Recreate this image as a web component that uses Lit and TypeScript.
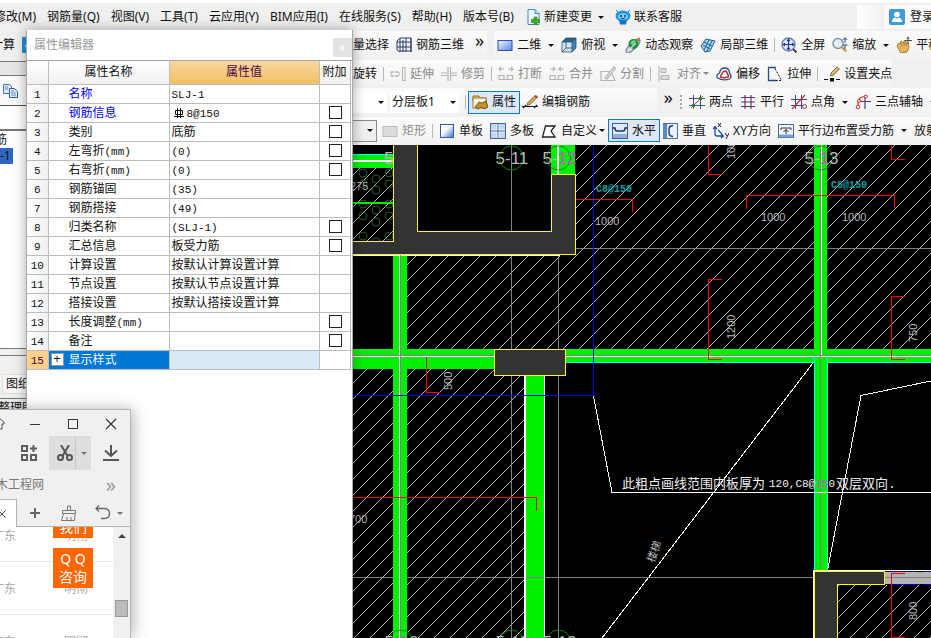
import { LitElement, html, svg, css, nothing, TemplateResult } from "lit";
import { customElement } from "lit/decorators.js";
import { classMap } from "lit/directives/class-map.js";

/* ---------- icons ---------- */
const glyphs: Record<string, TemplateResult> = {
  doc: svg`<path d="M3 .5h7l4 4v11H3z" fill="#eef7fd" stroke="#3a8ac0"/><path d="M10 .5v4h4" fill="#bfe0f3" stroke="#3a8ac0"/><path d="M9 8h3v2.500h2.500v3H12V16H9v-2.500H6.500v-3H9z" fill="#3fae29" stroke="#1d7d12" stroke-width=".6"/>`,
  robot: svg`<path d="M3 3 1 1M13 3l2-2" stroke="#1a7fc9"/><ellipse cx="8" cy="7" rx="7.500" ry="5.500" fill="#1d94e4"/><path d="M4 11h8l-1 4.500H5z" fill="#1277c2"/><ellipse cx="8" cy="7.500" rx="5" ry="3.200" fill="#7dd0ff"/><circle cx="6" cy="7" r="1" fill="#023a6b"/><circle cx="10" cy="7" r="1" fill="#023a6b"/><path d="M6 9q2 1.500 4 0" stroke="#023a6b" fill="none"/>`,
  user: svg`<rect width="16" height="16" rx="2" fill="#3d9bd6"/><circle cx="8" cy="5.500" r="2.800" fill="#fff"/><path d="M3 13q0-4 3.500-4.500L8 10l1.500-1.500Q13 9 13 13z" fill="#fff"/>`,
  blue: svg`<rect width="16" height="16" rx="1" fill="#1e90d8"/><path d="M3 10q1-5 5-4 5-1 5 4-5 3-10 0" fill="#d8efff"/>`,
  rebar: svg`<path d="M1 4l3-3v14l-3-2zM4 1h11v14M10 1v14M15 1v14M1 5h14M1 10h14M4 14h11M7 3v12" fill="none" stroke="#2a3c66"/>`,
  rect: svg`<defs><linearGradient id="rb" x2="1" y2="1"><stop stop-color="#f2f6ff"/><stop offset="1" stop-color="#5a86ea"/></linearGradient></defs><rect x="1" y="3.500" width="14" height="10" fill="url(#rb)" stroke="#2b50b4"/>`,
  rectg: svg`<rect x="1" y="3.500" width="14" height="10" fill="#dcdcdc" stroke="#bcbcbc"/>`,
  cube: svg`<path d="M1 5l4-4h10l-4 4z" fill="#2f6287"/><path d="M11 5l4-4v10l-4 4z" fill="#3f84b8"/><path d="M1 5h10v10H1z" fill="#cfe6f7"/><path d="M1 5l4-4h10v10l-4 4H1zM1 5h10v10M11 5l4-4M5 5v6l-4 4M5 11h6" fill="none" stroke="#2d4b66" stroke-width=".8"/>`,
  orbit: svg`<ellipse cx="8" cy="9" rx="9" ry="3" transform="rotate(-45 8 9)" fill="none" stroke="#7d94a8" stroke-width="1.500"/><circle cx="8.500" cy="7" r="5" fill="#1e8f3e"/><path d="M5 6q3-4 6-2l-3 4z" fill="#6fdc83"/><path d="M2 15l9-9" stroke="#c6d6e2" stroke-width="1.500"/><path d="M11 3l4-3-1 5z" fill="#c77428"/>`,
  partcube: svg`<path d="M1 9l5-7 9 2-5 10-5 1z" fill="#a9d4ee" stroke="#1b628f"/><path d="M4 5l8 4M3 8l7 4M9 3l-5 10M12 4L7 14" stroke="#1b628f" fill="none"/>`,
  full: svg`<circle cx="7.500" cy="7.500" r="6.500" fill="#e6edfa" stroke="#6d7c96" stroke-width="1.400"/><path d="M7.500 2.500v10M2.500 7.500h10M6 4l1.500-1.700L9 4M6 11l1.500 1.700L9 11M4 6L2.300 7.500 4 9M11 6l1.700 1.500L11 9" fill="none" stroke="#1d3da0" stroke-width="1.200"/><path d="M12 12l3.500 3.500" stroke="#444" stroke-width="2"/>`,
  zoom: svg`<circle cx="6" cy="6.500" r="5" fill="#e2ecfb" stroke="#8190a8" stroke-width="1.400"/><path d="M10 10l4 4.500" stroke="#c99a4a" stroke-width="2.400"/><path d="M13 1v5M10.800 3l2.200-2.200L15.200 3M11 8h4.500M13 8v4" stroke="#2e4b78" fill="none"/>`,
  hand: svg`<path d="M1 9l2-3 1 1 1-3 2 2 2-3 1 3 2 0 1 4-2 5-6 1z" fill="#e5b45a" stroke="#96631b" stroke-width=".8"/><path d="M5 6l1 3M8 5v4M10 6v3" stroke="#96631b" stroke-width=".6"/><path d="M12 0v7M9 3.500h7M10.800 1.500L12 0l1.200 1.500" stroke="#4a4a4a" fill="none"/>`,
  extend: svg`<path d="M1 6h8M1 10h8" stroke="#b4b4b4" stroke-width="1.300" stroke-dasharray="3 1"/><path d="M1 6v4M9 6v4M12.500 1v14M15 1v14M12 1.500h3.500M12 14.500h3.500" stroke="#b4b4b4" fill="none"/>`,
  trim: svg`<path d="M0 7h6M10 7h6M0 9.500h6M10 9.500h6M7 1v14M9.500 1v14" stroke="#b4b4b4" fill="none" stroke-width="1.200"/>`,
  brk: svg`<path d="M1 3h5M3 1L1 3l2 2M10 3h5M13 1l2 2-2 2M1 9.500h5v4H1zM9.500 9.500h5v4h-5zM1 13.500h14" stroke="#b4b4b4" fill="none" stroke-width="1.200"/>`,
  join: svg`<path d="M1 3h5M4 1l2 2-2 2M10 3h5M12 1l-2 2 2 2M1 9.500h5v4H1zM9.500 9.500h5v4h-5zM1 13.500h14" stroke="#b4b4b4" fill="none" stroke-width="1.200"/>`,
  split: svg`<path d="M.500 5.500h9M.500 14.500h15M1 5v9M5 12l9-11 1.500 1.500L7 13zM12 8l3 6" stroke="#b4b4b4" fill="none" stroke-width="1.200"/>`,
  align: svg`<path d="M2 0v16" stroke="#aaa"/><path d="M4 2.500h5v4H4zM4 9.500h8v4H4z" fill="#ddd" stroke="#b4b4b4"/>`,
  offset: svg`<path d="M1.500 12q-2-3 2-5 1-5 5-5 5 0 5 5 3 4 0 6-6 2-12-1z" fill="#f0f4fa" stroke="#32547d" stroke-width="1.300"/><path d="M4.500 11q0-2 1.500-3 1-3 3-3t2.500 3q1.500 2 .5 3-4 1.500-7.500 0z" fill="#fff" stroke="#c82a32" stroke-width="1.500"/>`,
  stretch: svg`<path d="M9 1.500H1.500v13H9" fill="none" stroke="#2b4c8c" stroke-width="1.300"/><path d="M8 2.500l6.500 12H7" fill="none" stroke="#111" stroke-dasharray="2 1.500"/>`,
  grip: svg`<path d="M0 13.500h4M12 13.500h4" stroke="#111"/><rect x="6" y="12" width="4" height="3.500" fill="#111"/><path d="M6.500 10l.5-3 6-6 2.500 2-6 6z" fill="#d8ba71" stroke="#66512b" stroke-width=".8"/>`,
  props: svg`<path d="M1 4V2h6l1 2h6v3H1z" fill="#efc370" stroke="#9a6b21"/><rect x="1" y="4" width="13" height="10" fill="#fbf5e7" stroke="#a07a3c"/><path d="M3 13l4-5 3 1 4-2 2 6-4 2-3-2-3 2z" fill="#c59225" stroke="#5e430d" stroke-width=".8"/>`,
  pencil: svg`<path d="M0 12.500h16M1 14l3-3M12 14l3-3" stroke="#222" stroke-width="1.200"/><path d="M5 11.500l1-3 7-7 2 2-7 7z" fill="#d8a95a" stroke="#6b4822" stroke-width=".8"/><path d="M12.500 2.500l1.500-1.500 2 2-1.500 1.500z" fill="#c4343a"/>`,
  twopt: svg`<path d="M4.500 1v14M11.500 1v14M0 4.500h16M0 11.500h16" stroke="#4a4e8c"/><path d="M2 14L14 2" stroke="#c8323a"/><circle cx="4.500" cy="11.500" r="1.800" fill="#2e7a2e"/><circle cx="11.500" cy="4.500" r="1.800" fill="#2e7a2e"/>`,
  parallel: svg`<path d="M5 1v14M11 1v14" stroke="#8a3640" stroke-width="1.200"/><path d="M1 3.500h14M1 8h14M1 12.500h14" stroke="#3b437f"/>`,
  ptangle: svg`<path d="M4.500 1v14M10.500 1v14M0 5.500h16M0 11.500h12" stroke="#3b437f"/><path d="M1 15L14 1" stroke="#c8323a" stroke-width="1.200"/><circle cx="13.500" cy="12.500" r="2" fill="none" stroke="#c8323a"/>`,
  arc3: svg`<path d="M10 1v14M5 7.500h11" stroke="#3b437f" stroke-width="1.200"/><path d="M3 13V8q0-5 7-5.500" fill="none" stroke="#c8323a" stroke-width="1.200"/><circle cx="3" cy="13" r="1.800" fill="#fff" stroke="#c8323a"/><circle cx="11" cy="2.500" r="1.500" fill="#fff" stroke="#c8323a"/><circle cx="4" cy="7" r="1.500" fill="#fff" stroke="#c8323a"/>`,
  single: svg`<defs><linearGradient id="sb" x2="1" y2="1"><stop offset=".4" stop-color="#fff"/><stop offset="1" stop-color="#3b6fd8"/></linearGradient></defs><rect x="1.500" y="1.500" width="13" height="13" fill="url(#sb)" stroke="#3159b4"/>`,
  multi: svg`<rect x=".5" y=".5" width="15" height="15" fill="#c3d6ee" stroke="#41699c"/><path d="M8 1v14M1 8h14" stroke="#f8fbff" stroke-width="3"/><path d="M8 1v14M1 8h14" stroke="#41699c"/>`,
  poly: svg`<path d="M4.500 3h9.500l-4 5 4 6H1.500z" fill="#fff" stroke="#222" stroke-width="1.300"/>`,
  horiz: svg`<rect x=".5" y=".5" width="15" height="15" fill="#dfeafb" stroke="#3a5f9c"/><rect x="1" y="11" width="14" height="4" fill="#8fb0dd"/><path d="M1 5h2q0 3 2 3h6q2 0 2-3h2" fill="none" stroke="#17355f" stroke-width="1.400"/>`,
  vert: svg`<rect x="1.500" y=".5" width="14" height="15" fill="#e8f0fb" stroke="#4a6fae"/><rect x="1" y="1" width="4" height="14" fill="#5b86c9"/><path d="M11 2.500Q7 3 7 6v4q0 3 4 3.500" fill="none" stroke="#17355f" stroke-width="1.400"/>`,
  xy: svg`<path d="M2 4v7q0 2 2 2h6M0 6l2-2.500L4 6M8 11l2.500 2L8 15M5 7l4 4" fill="none" stroke="#1f4fa8" stroke-width="1.300"/><path d="M5 0l3 4M8 0L5 4M12 10l2 3M16 10l-3 6" stroke="#222" fill="none"/>`,
  edge: svg`<rect x=".5" y="1.500" width="15" height="13" fill="#f5f8fd" stroke="#41699c"/><rect x="1" y="11.500" width="14" height="3" fill="#7ba3da"/><path d="M3 7V5h10v2M8 6v5M5.500 9L8 6.500 10.500 9" fill="none" stroke="#333"/>`,
  copy: svg`<path d="M1.500 1.500h6l2 2v7h-8z" fill="#dbe9fa" stroke="#4274b4"/><path d="M7.500 5.500h5l3 3v6h-8z" fill="#eaf3fd" stroke="#2a5fa5"/><path d="M9 8h3M9 10h5M9 12h5M3 4h3M3 6h3" stroke="#5d8ac4"/>`,
  addgrid: svg`<path d="M1 1h5v5H1zM1 10h5v5H1zM10 10h5v5h-5zM12.500 0v7M9 3.500h7" fill="none" stroke="#5f5f5f" stroke-width="2"/>`,
  cut: svg`<path d="M4 0l6.500 11M12 0L5.500 11" stroke="#555" stroke-width="2" fill="none"/><circle cx="3.500" cy="12.500" r="2.500" fill="none" stroke="#555" stroke-width="2"/><circle cx="12.500" cy="12.500" r="2.500" fill="none" stroke="#555" stroke-width="2"/>`,
  down: svg`<path d="M8 0v11M2 5.500L8 11l6-5.500M0 15h16" fill="none" stroke="#555" stroke-width="2"/>`,
  plus: svg`<path d="M8 3v10M3 8h10" stroke="#666" stroke-width="2"/>`,
  brush: svg`<path d="M6.500 5V1h3v4M1.500 5.500h13v3h-13zM2.500 8.500l-2 7h13l.5-7M6 15v-3M10 15v-3" fill="none" stroke="#777"/>`,
  undo: svg`<path d="M1 3.500h8q5.500 0 5.500 5t-5.500 5H6M4 .500l-3 3 3 3" fill="none" stroke="#666" stroke-width="1.300"/>`,
  min: svg`<path d="M3 8.500h10" stroke="#333"/>`,
  max: svg`<rect x="3.500" y="3.500" width="9" height="9" fill="none" stroke="#333"/>`,
  cross: svg`<path d="M3 3l10 10M13 3L3 13" stroke="#333" stroke-width="1.200"/>`,
  skin: svg`<path d="M10 2l-5 4v2h2v5h6V8h2V6z" fill="none" stroke="#555"/>`,
};
const icon = (name: string) =>
  html`<svg class="ico" viewBox="0 0 16 16" aria-hidden="true">${glyphs[name]}</svg>`;

/* Latin runs in the property grid use the narrower fixed-pitch face. */
const mixed = (t: string) =>
  t.split(/([\x20-\x7e]+)/).map((s) => (/^[\x20-\x7e]/.test(s) ? html`<span class="mono">${s}</span>` : s));

interface Row { name: string; value?: string; tick?: boolean; blue?: boolean; symbol?: boolean }

const shared = css`
  .ico { width: 16px; height: 16px; flex: none; display: block; }
  button { font: inherit; color: inherit; background: none; border: 0; margin: 0; padding: 0; white-space: nowrap; flex: none; }
  * { box-sizing: border-box; }
`;

/* ---------- property editor ---------- */
@customElement("property-editor")
export class PropertyEditor extends LitElement {
  rows: Row[] = [
    { name: "名称", value: "SLJ-1", blue: true },
    { name: "钢筋信息", value: "8@150", tick: true, blue: true, symbol: true },
    { name: "类别", value: "底筋", tick: true },
    { name: "左弯折(mm)", value: "(0)", tick: true },
    { name: "右弯折(mm)", value: "(0)", tick: true },
    { name: "钢筋锚固", value: "(35)" },
    { name: "钢筋搭接", value: "(49)" },
    { name: "归类名称", value: "(SLJ-1)", tick: true },
    { name: "汇总信息", value: "板受力筋", tick: true },
    { name: "计算设置", value: "按默认计算设置计算" },
    { name: "节点设置", value: "按默认节点设置计算" },
    { name: "搭接设置", value: "按默认搭接设置计算" },
    { name: "长度调整(mm)", tick: true },
    { name: "备注", tick: true },
  ];

  static styles = [shared, css`
    :host { display: flex; flex-direction: column; background: #fff; border-left: 1px solid #a8a8ac; border-right: 1px solid #a8a8ac; box-shadow: 0 0 12px rgba(0, 0, 0, 0.35); font: 12px/18px "Liberation Sans", "Noto Sans CJK SC", sans-serif; color: #111; }
    header { height: 31px; display: flex; align-items: center; justify-content: space-between; padding-left: 7px; color: #9a9a9a; border-bottom: 1px solid #a8a8ac; }
    .close { width: 19px; height: 19px; background: #e3e3e3; color: #fff; font-size: 10px; line-height: 19px; margin-top: 4px; }
    .grid { border-collapse: collapse; table-layout: fixed; width: 323px; }
    .c-no { width: 21px; } .c-name { width: 121px; } .c-val { width: 150px; } .c-tick { width: 31px; }
    th, td { padding: 0; height: 19px; border-right: 1px solid #bdbdbd; border-bottom: 1px solid #bdbdbd; font-weight: 400; white-space: nowrap; overflow: hidden; line-height: 18px; }
    thead th { height: 23px; background: linear-gradient(#fff, #f0f0f0); }
    thead .on { background: linear-gradient(#f9d79f, #f2bf62); color: #4d004d; }
    tbody th { background: linear-gradient(90deg, #fff, #efefef); }
    .mono { font: 11px/16px "Liberation Mono", monospace; }
    .name { padding-left: 20px; }
    .blue { color: #00f; }
    .val { padding-left: 2px; }
    .sym { width: 10px; height: 10px; margin: 0 3px 0 2px; vertical-align: -1px; }
    input { appearance: none; width: 13px; height: 13px; border: 1px solid #222; background: #fff; margin: 0 0 0 9px; display: block; }
    .sel th { background: #ffd08a; color: #4d004d; }
    .sel .name { background: #0078d7; color: #fff; padding-left: 2px; }
    .sel .val { background: #d9e9f7; }
    .branch { display: flex; align-items: center; gap: 5px; }
    .plus { width: 13px; height: 13px; background: #fff; border: 1px solid #999; color: #000; line-height: 11px; }
  `];

  render() {
    return html`
      <header><span>属性编辑器</span><button class="close" aria-label="关闭">x</button></header>
      <table class="grid">
        <colgroup><col class="c-no" /><col class="c-name" /><col class="c-val" /><col class="c-tick" /></colgroup>
        <thead><tr><th></th><th>属性名称</th><th class="on">属性值</th><th>附加</th></tr></thead>
        <tbody>
          ${this.rows.map((r, i) => html`
            <tr>
              <th><span class="mono">${i + 1}</span></th>
              <td class=${classMap({ name: true, blue: !!r.blue })}>${mixed(r.name)}</td>
              <td class="val">${r.symbol ? html`<svg class="sym" viewBox="0 0 10 10"><path d="M1.500 2.500h7v4h-7zM3.500 0v10M6.500 0v10M0 8.500h10" fill="none" stroke="#111"/></svg>` : nothing}${mixed(r.value ?? "")}</td>
              <td>${r.tick ? html`<input type="checkbox" aria-label=${"附加 " + r.name} />` : nothing}</td>
            </tr>`)}
          <tr class="sel">
            <th><span class="mono">15</span></th>
            <td class="name"><div class="branch"><button class="plus" aria-label="展开">+</button>显示样式</div></td>
            <td class="val"></td><td></td>
          </tr>
        </tbody>
      </table>`;
  }
}

/* ---------- small browser window ---------- */
@customElement("browser-window")
export class BrowserWindow extends LitElement {
  static styles = [shared, css`
    :host { display: flex; flex-direction: column; background: #f0f0f0; border: 1px solid #b4b4b4; border-width: 1px 1px 0 0; box-shadow: 2px 0 14px rgba(0, 0, 0, 0.3); font: 12px/18px "Noto Sans", "Noto Sans CJK SC", sans-serif; color: #777; overflow: hidden; }
    .caption { display: flex; justify-content: space-between; height: 26px; align-items: center; padding: 2px 11px 0 0; margin-left: -11px; }
    .tools { display: flex; height: 34px; align-items: center; padding-left: 21px; }
    .cut { display: flex; align-items: center; height: 34px; margin: 0 12px; background: #dedede; }
    .cut button { height: 34px; display: grid; place-items: center; }
    .main { width: 27px; padding-left: 6px; border-right: 1px solid #c8c8c8; }
    .drop { width: 15px; }
    .caret { border: 3px solid transparent; border-top-color: #777; border-bottom: 0; }
    .marks { display: flex; justify-content: space-between; height: 30px; align-items: center; padding-right: 14px; margin-left: -4px; }
    .more { font-size: 20px; color: #999; line-height: 20px; }
    .tabs { display: flex; height: 27px; align-items: center; border-bottom: 1px solid #b4b4b4; gap: 18px; padding-right: 6px; }
    .tab { width: 17px; height: 28px; background: #fff; border: 1px solid #b4b4b4; border-width: 1px 1px 0 0; display: flex; align-items: center; margin-right: -8px; overflow: hidden; }
    .tab .ico { width: 12px; margin-left: -4px; }
    .undo { display: flex; align-items: center; gap: 6px; }
    .page { flex: 1; display: flex; background: #fff; min-height: 0; }
    .list { flex: 1; position: relative; overflow: hidden; color: #aaa; }
    .item { display: flex; justify-content: space-between; height: 53px; border-bottom: 1px solid #e8e8e8; padding: 18px 25px 0 0; margin-left: -8px; }
    .item:first-child { height: 35px; padding-top: 0; }
    .ads { position: absolute; left: 53px; top: -29px; display: grid; gap: 10px; }
    .ad { display: block; width: 40px; height: 40px; background: #f60; color: #fff; font-size: 14px; line-height: 18px; padding-top: 2px; text-align: center; text-decoration: none; }
    .scroll { width: 17px; background: #f0f0f0; display: flex; flex-direction: column; align-items: center; padding-top: 7px; }
    .up { border: 4px solid transparent; border-bottom-color: #444; border-top: 0; }
    .thumb { width: 13px; height: 17px; margin-top: 62px; background: #bcbcbc; border: 1px solid #999; }
  `];

  render() {
    return html`
      <div class="caption">${["skin", "min", "max", "cross"].map((n) => html`<button>${icon(n)}</button>`)}</div>
      <div class="tools">
        <button>${icon("addgrid")}</button>
        <span class="cut"><button class="main">${icon("cut")}</button><button class="drop"><span class="caret"></span></button></span>
        <button>${icon("down")}</button>
      </div>
      <div class="marks"><button>木工程网</button><button class="more">»</button></div>
      <div class="tabs">
        <button class="tab">${icon("cross")}</button><button>${icon("plus")}</button><button>${icon("brush")}</button>
        <button class="undo">${icon("undo")}<span class="caret"></span></button>
      </div>
      <div class="page">
        <div class="list">
          ${[0, 1, 2].map(() => html`<div class="item"><span>广东</span><span>明彻</span></div>`)}
          <div class="ads"><a class="ad" href="#">联系<br />我们</a><a class="ad" href="#">Q Q<br />咨询</a></div>
        </div>
        <div class="scroll"><span class="up"></span><span class="thumb"></span></div>
      </div>`;
  }
}

/* ---------- drawing ---------- */
@customElement("cad-canvas")
export class CadCanvas extends LitElement {
  static styles = css`
    :host { display: block; background: #000; position: relative; overflow: hidden; }
    .dwg { display: block; width: 100%; height: 100%; position: absolute; inset: 0; shape-rendering: crispEdges; }
    text { font-family: "Liberation Sans", "Noto Sans CJK SC", sans-serif; font-size: 11px; fill: #b8b8b8; }
    .axis { font-size: 17px; }
    .pink { fill: #d050d0; }
    .teal { fill: #10a0a0; font-family: "Liberation Mono", monospace; font-size: 10px; font-weight: 700; }
    .note { fill: #f0f0f0; font-family: "Liberation Mono", "Noto Sans CJK SC", monospace; }
    .han { font-size: 13px; }
    .g { fill: #00f000; } .w { fill: #fff; } .gray { fill: #808080; } .hatch { fill: url(#hatch); }
    .wall { fill: #333; stroke: #ff0; }
    .red, .blue, .cyan, .white, .bubble, .soil { fill: none; }
    .red { stroke: #f00; } .blue { stroke: #0000e0; } .cyan { stroke: #0ff; } .white { stroke: #fff; }
    .bubble { stroke: #008a00; shape-rendering: auto; } .soil { stroke: #2c5a2c; shape-rendering: auto; }
  `;

  bubble(x: number, y: number, plain: string, pink: string, rest = "") {
    return svg`<circle class="bubble" cx=${x} cy=${y} r="12"/>
      <text class="axis" x=${x - 16} y=${y + 6}>5-${plain}<tspan class="pink">${pink}</tspan>${rest}</text>`;
  }
  turned(x: number, y: number, t: string) {
    return svg`<text transform="translate(${x} ${y}) rotate(-90)">${t}</text>`;
  }

  render() {
    const soil = [155, 170, 186, 202, 218, 234].flatMap((y, i) => [363, 376, 389].map((x, j) => [x, y + 18 + (j % 2) * 6 - 4 * (i % 2)]));
    return html`<svg class="dwg" viewBox="353 145 578 493" preserveAspectRatio="xMinYMin slice" role="img" aria-label="板受力筋平面图">
      <defs>
        <pattern id="hatch" width="16" height="16" patternUnits="userSpaceOnUse"><path d="M0 16L16 0M-1 1L1-1M15 17L17 15" stroke="#b8b8b8" fill="none"/></pattern>
        <clipPath id="soilclip"><rect x="353" y="168" width="40" height="73"/></clipPath>
      </defs>
      <path class="hatch" d="M353 168h40v73h-40zM407 256h169v93H407zM576 145h238v204H576zM827 145h104v204H827zM353 369h40v269h-40zM407 369h117v269H407zM838 585h93v53h-93z"/>
      <g clip-path="url(#soilclip)">${soil.map(([x, y]) => svg`<circle class="soil" cx=${x} cy=${y} r="4"/>`)}</g>
      <path class="gray" d="M576 248h355v1H576zM353 577h461v1H353zM511 145h1v493h-1zM558 255h1v383h-1z"/>

      <path class="g" d="M353 155h40v13h-40zM353 202h40v2h-40zM551 145h24v29h-24zM393 255h14v383h-14zM353 349h141v20H353zM566 349h365v13H566zM526 376h18v262h-18zM814 145h13v211h-13zM814 356h14v215h-14z"/>
      <path class="w" d="M353 160h40v2h-40zM557 145h2v29h-2zM399 255h1v383h-1zM353 356h141v1H353zM566 356h365v1H566zM821 145h1v212h-1zM524 376h2v262h-2zM544 376h1v262h-1zM353 255h207v1H353zM813 570h118v1H813zM813 570h1v68h-1z"/>
      <path class="gray" d="M400 255h1v383h-1zM353 355h141v1H353zM566 355h365v1H566zM820 145h1v425h-1zM526 577h18v1h-18z"/>
      <path class="cyan" d="M353 154.500h40M566 362.500h248M828 362.500h103M814.500 356v214M827.500 356v214"/>
      <path class="blue" d="M593.500 145v250.500H353"/>
      <path class="white" d="M593.500 396L612 492.500h319M813 363L602 638M931 381L861 395.500 828 568"/>

      <text class="axis" x="384" y="164">5</text>
      <path class="wall" d="M393.500 140V241.500H340V254.500H575.500V174.500H551.500V231.500H417.500V140z"/>
      <rect class="wall" x="494.500" y="349.500" width="71" height="26"/>
      <rect x="885" y="572" width="60" height="12" fill="#b4b4b4"/>
      <rect class="gray" x="885" y="577" width="46" height="1"/>
      <path d="M891 571.500h54M891 584.500h54" stroke="#0000b0" stroke-dasharray="26 6"/>
      <path class="wall" d="M814.500 645V571.500H884.500V584.500H837.500V645"/>

      <path class="red" d="M426.500 357v35.500H440M576 199.500h56.500V212M708.500 145v29.500H722M746.500 209v-13.500H894.500V208M891.500 145v14.500H905M722 279.500H708.500v80H722M905 296.500H891.500v63H905M905 573.500H891.500v64H905M353 497.500H536.500V511"/>

      ${this.bubble(511.5, 158, "11", "")}${this.bubble(558.5, 158, "", "12")}${this.bubble(820.5, 158, "", "1", "3")}
      ${this.bubble(400.5, 642, "", "1", "0")}${this.bubble(511.5, 642, "11", "")}${this.bubble(558.5, 642, "12", "")}
      <text x="350" y="190">275</text><text x="349" y="523">700</text>
      <text class="teal" x="596" y="192">C8@150</text><text class="teal" x="831" y="188">C8@150</text>
      <text x="595" y="225">1000</text><text x="761" y="221">1000</text><text x="842" y="221">1000</text>
      ${this.turned(452, 390, "500")}${this.turned(735, 159, "1000")}${this.turned(735, 339, "1200")}
      ${this.turned(917, 342, "750")}${this.turned(917, 620, "800")}
      <text class="note han" x="622" y="488">此粗点画线范围内板厚为</text>
      <text class="note" x="769" y="487">120,C8@<tspan class="pink">15</tspan>0</text>
      <text class="note han" x="836" y="488">双层双向.</text>
      <text transform="translate(654 563) rotate(-70)">楼梯</text>
    </svg>`;
  }
}

/* ---------- application ---------- */
interface Tool { t: string; i?: string; drop?: boolean; tight?: boolean; off?: boolean; on?: boolean }

@customElement("app-root")
export class AppRoot extends LitElement {
  static styles = [shared, css`
    :host { display: flex; flex-direction: column; min-height: 100vh; position: relative; overflow: hidden; background: #f0f0f0; color: #111; font: 12px/18px "Noto Sans", "Noto Sans CJK SC", sans-serif; }
    .menu { display: flex; align-items: center; height: 31px; border-top: 3px solid #fff; gap: 11px; margin-left: -6px; }
    .menu .entry { display: flex; align-items: center; gap: 3px; }
    .blank { width: 24px; height: 24px; margin-left: auto; background: linear-gradient(90deg, #fff, #f3f3f3); flex: none; }
    .login { display: flex; align-items: center; gap: 5px; background: #fafafa; height: 24px; padding-left: 5px; width: 47px; margin-left: -8px; overflow: hidden; }
    .body { flex: 1; display: flex; min-height: 0; }
    .side { flex: 0 0 353px; display: flex; flex-direction: column; }
    .work { flex: 1; min-width: 0; display: flex; flex-direction: column; }
    .bars { height: 114px; display: flex; flex-direction: column; overflow: hidden; }
    .row { flex: 1; display: flex; align-items: center; gap: 7px; }
    .wide { margin-right: -5px; }
    .band { align-self: stretch; display: flex; align-items: center; gap: 7px; background: linear-gradient(#fbfbfb, #f1f1f1); flex: none; }
    .fill { flex: 1 0 auto; }
    .view { padding-left: 3px; }
    .tool { display: flex; align-items: center; gap: 4px; }
    .off { color: #8c8c8c; }
    .on { background: #dbe9f7; border: 1px solid #0a78d0; height: 23px; padding: 0 3px; margin: 0 -5px 0 -4px; }
    .caret { border: 3px solid transparent; border-top-color: #111; border-bottom: 0; margin: 0 0 0 3px; }
    .off .caret { border-top-color: #888; }
    .tight { margin-left: -2px; }
    .sep { width: 1px; height: 14px; background: #b8b8b8; flex: none; margin: 0 -1px; }
    .dots { border-left: 2px dotted #aaa; height: 14px; }
    .chev { font-size: 18px; line-height: 18px; align-self: flex-start; }
    .band .chev { padding: 0 3px 0 4px; }
    .combo { position: relative; display: flex; align-items: center; background: #fff; height: 22px; }
    select { appearance: none; font: inherit; color: inherit; border: 0; background: none; height: 22px; padding: 0 2px; margin: 0; width: 69px; outline: 0; }
    .combo::after { content: ""; position: absolute; right: 3px; border: 3px solid transparent; border-top-color: #111; border-bottom: 0; }
    .stub { width: 34px; margin-right: -4px; }
    .mini { width: 24px; border: 1px solid #8a8a8a; border-left: 0; background: #f0f0f0; margin-right: -2px; }
    .sheet { flex: 1; }
    .sidebar-top { height: 30px; display: flex; align-items: center; gap: 7px; margin-left: -9px; padding-bottom: 2px; }
    .strip { height: 15px; border: 1px solid #777; border-width: 1px 0; background: #e6e6e6; }
    .copybar { height: 30px; display: flex; align-items: center; padding-left: 2px; border-bottom: 1px solid #555; background: #fafafa; }
    .gap { height: 25px; background: #fff; border-bottom: 2px solid #777; }
    .tree { height: 217px; background: #fff; overflow: hidden; padding: 1px 0 0; margin: 0; list-style: none; }
    .tree li { line-height: 16px; margin-left: -5px; }
    .tree .pick { background: #2f66c0; width: 18px; padding-left: 5px; }
    .strip2 { height: 8px; border: 1px solid #777; border-width: 1px 0; }
    .tabline { display: flex; height: 43px; align-items: flex-end; border-bottom: 1px solid #777; padding: 0 0 4px 2px; }
    .tab { border: 1px solid #ddd; background: #f7f7f7; height: 20px; padding-left: 3px; }
    .head { margin-left: -2px; }
    property-editor { position: absolute; left: 26px; top: 30px; bottom: 0; width: 327px; }
    browser-window { position: absolute; left: 0; top: 409px; bottom: 0; width: 131px; }
  `];

  tool(x: Tool) {
    return html`<button class=${classMap({ tool: true, off: !!x.off, on: !!x.on })}>${x.i ? icon(x.i) : nothing}<span>${x.t}</span>${x.drop ? html`<span class=${classMap({ caret: true, tight: !!x.tight })}></span>` : nothing}</button>`;
  }
  tools(list: (Tool | "|")[]) {
    return list.map((x) => (x === "|" ? html`<span class="sep"></span>` : this.tool(x)));
  }

  render() {
    return html`
      <nav class="menu">
        ${["修改(M)", "钢筋量(Q)", "视图(V)", "工具(T)", "云应用(Y)", "BIM应用(I)", "在线服务(S)", "帮助(H)", "版本号(B)"].map((t) => html`<button>${t}</button>`)}
        <button class="entry">${icon("doc")}新建变更<span class="caret"></span></button>
        <button class="entry">${icon("robot")}联系客服</button>
        <span class="blank"></span>
        <button class="login">${icon("user")}登录</button>
      </nav>
      <div class="body">
        <aside class="side">
          <div class="sidebar-top"><span>计算</span>${icon("blue")}</div>
          <div class="strip"></div>
          <div class="copybar"><button aria-label="复制">${icon("copy")}</button></div>
          <div class="gap"></div>
          <ul class="tree"><li>筋</li><li class="pick">-1</li></ul>
          <div class="strip2"></div>
          <div class="tabline"><button class="tab">图纸</button></div>
          <div class="head">整理图</div>
        </aside>
        <main class="work">
          <div class="bars">
            <div class="row">
              <div class="band">${this.tools([{ t: "量选择" }, { t: "钢筋三维", i: "rebar" }])}<button class="chev">»</button></div>
              <div class="band fill view">${this.tools([{ t: "二维", i: "rect", drop: true }, { t: "俯视", i: "cube", drop: true }, { t: "动态观察", i: "orbit" }, { t: "局部三维", i: "partcube" }, "|", { t: "全屏", i: "full" }, { t: "缩放", i: "zoom", drop: true }, { t: "平移", i: "hand" }])}</div>
            </div>
            <div class="row"><div class="band">${this.tools([{ t: "旋转" }, "|", { t: "延伸", i: "extend", off: true }, { t: "修剪", i: "trim", off: true }, "|", { t: "打断", i: "brk", off: true }, { t: "合并", i: "join", off: true }, { t: "分割", i: "split", off: true }, "|", { t: "对齐", i: "align", off: true, drop: true, tight: true }, { t: "偏移", i: "offset" }, { t: "拉伸", i: "stretch" }, "|", { t: "设置夹点", i: "grip" }])}</div></div>
            <div class="row wide">
              <div class="band fill"><span class="combo stub"></span><span class="combo"><select aria-label="分层板"><option>分层板1</option></select></span>${this.tools(["|", { t: "属性", i: "props", on: true }, { t: "编辑钢筋", i: "pencil" }])}</div>
              <button class="chev">»</button>
              <div class="band"><span class="dots"></span>${this.tools([{ t: "两点", i: "twopt" }, { t: "平行", i: "parallel" }, { t: "点角", i: "ptangle", drop: true }, { t: "三点辅轴", i: "arc3", drop: true }])}</div>
            </div>
            <div class="row"><div class="band fill"><span class="combo mini"></span>${this.tools([{ t: "矩形", i: "rectg", off: true }, "|", { t: "单板", i: "single" }, { t: "多板", i: "multi" }, { t: "自定义", i: "poly", drop: true, tight: true }, { t: "水平", i: "horiz", on: true }, { t: "垂直", i: "vert" }, { t: "XY方向", i: "xy" }, { t: "平行边布置受力筋", i: "edge", drop: true }, { t: "放射" }])}</div></div>
          </div>
          <cad-canvas class="sheet"></cad-canvas>
        </main>
      </div>
      <property-editor></property-editor>
      <browser-window></browser-window>`;
  }
}
